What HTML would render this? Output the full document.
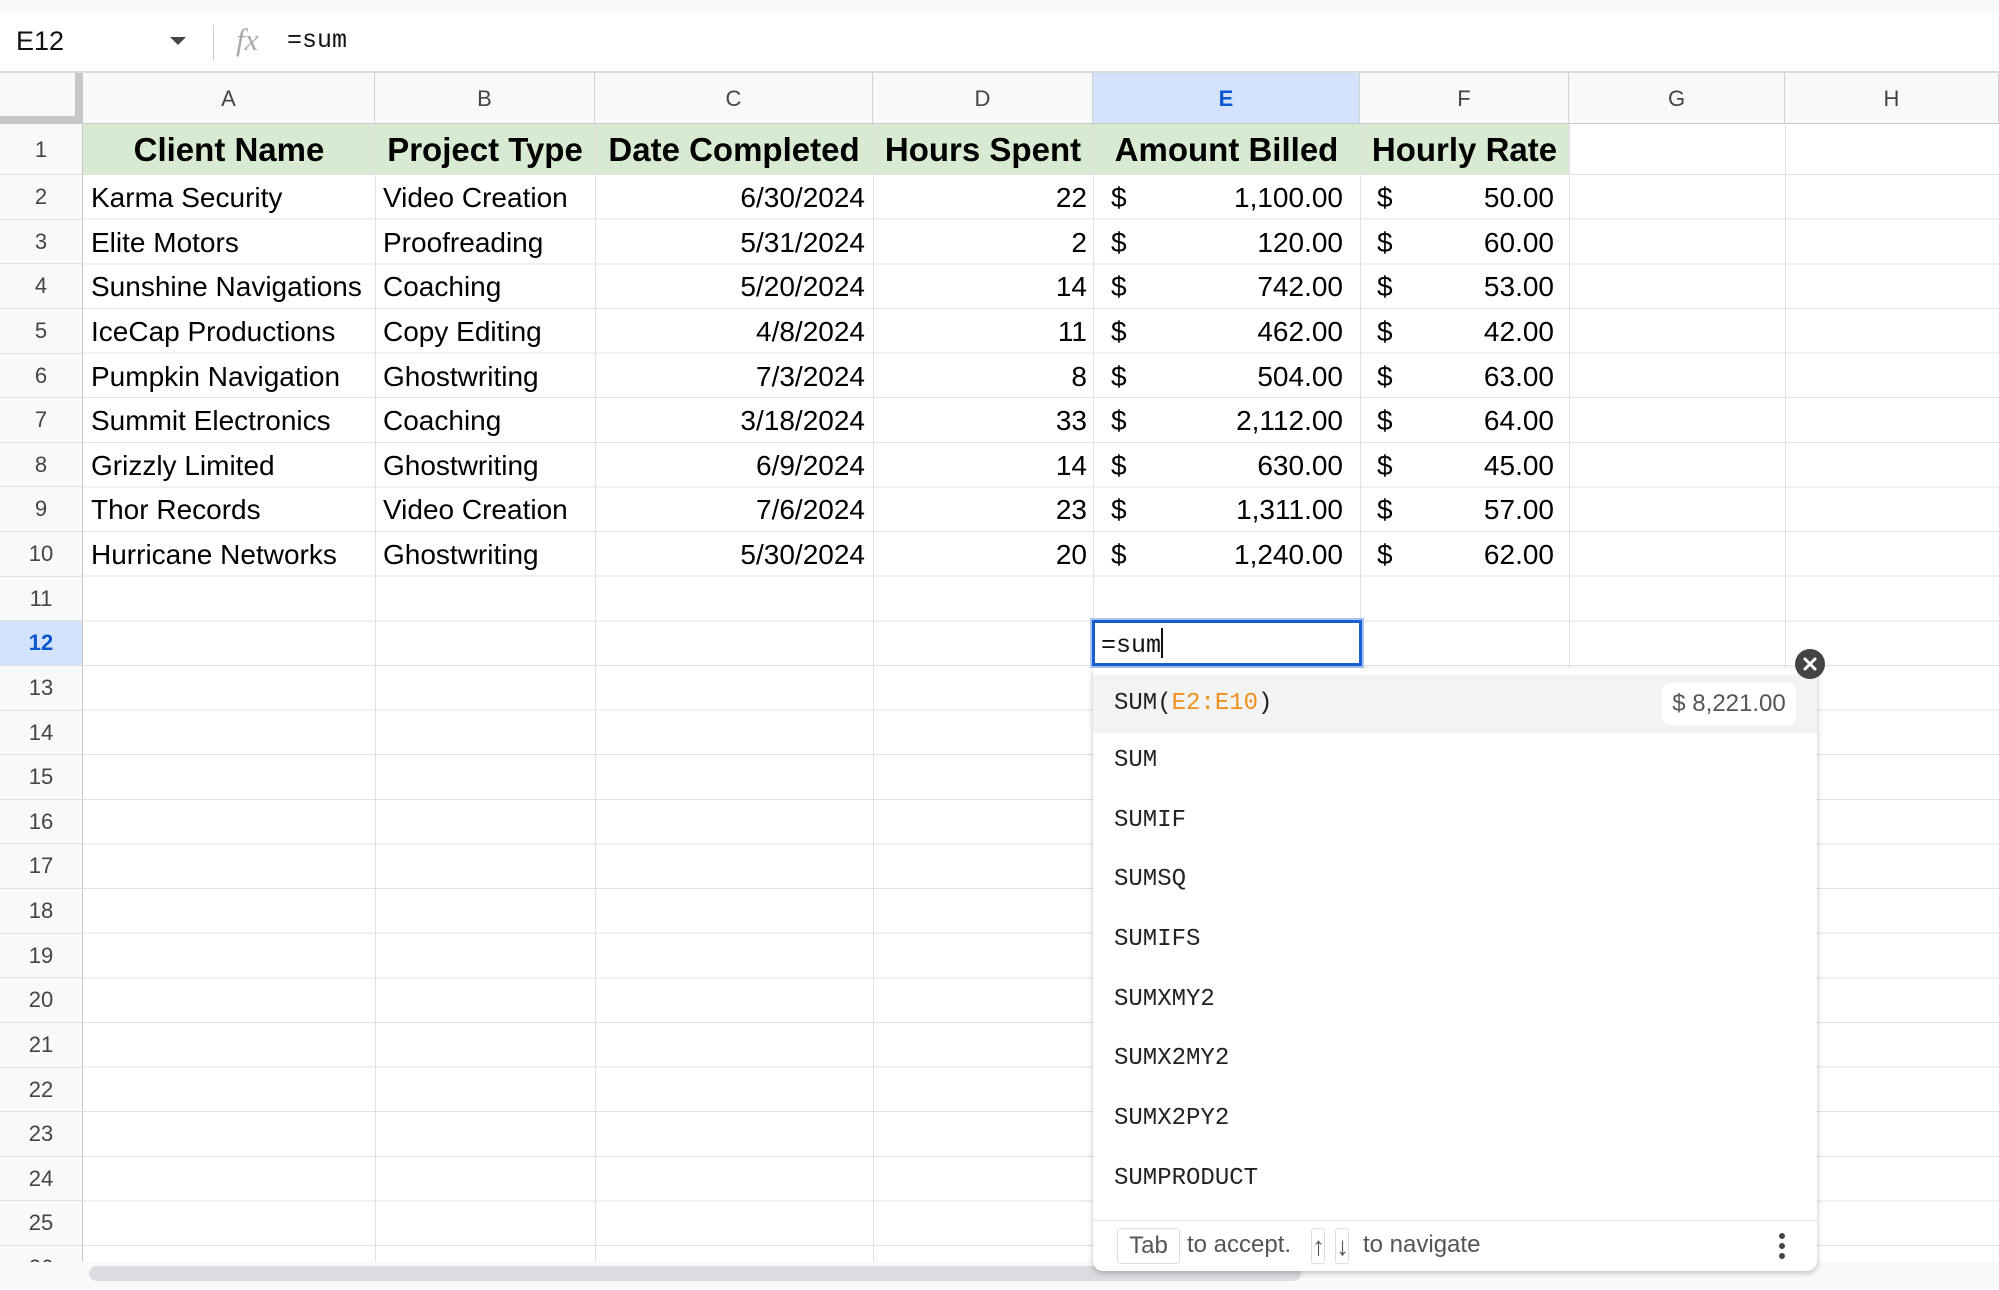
<!DOCTYPE html>
<html><head><meta charset="utf-8"><style>
*{margin:0;padding:0;box-sizing:border-box}
body{width:1999px;height:1289px;overflow:hidden;background:#fff;font-family:"Liberation Sans",Arial,sans-serif;position:relative;color:#000}
.a{position:absolute;white-space:nowrap}
.grid{position:absolute;left:83px;top:175px;width:1916px;height:1090px;
background-image:repeating-linear-gradient(to bottom,transparent 0,transparent 43.63px,#e1e1e1 43.63px,#e1e1e1 44.63px);}
.vl{position:absolute;width:1px;background:#e1e1e1;top:73px;height:1192px}
.rh{position:absolute;left:0;width:83px;text-align:center;font-size:22px;color:#444;background:#f8f9fa;border-right:1px solid #c7c7c7}
.ch{position:absolute;top:73px;height:51px;line-height:51px;text-align:center;font-size:22px;color:#444;background:#f8f9fa;border-bottom:1px solid #c7c7c7;border-right:1px solid #d0d0d0}
.c{position:absolute;font-size:28px;height:44px;line-height:46px;white-space:nowrap}
.r{text-align:right}
.m{font-family:"Liberation Mono",monospace;font-size:24px;color:#222;position:absolute;left:1114px;white-space:nowrap}
</style></head><body>
<div class="a" style="left:0;top:0;width:1999px;height:13px;background:#f8f9fa"></div>
<div class="a" style="left:0;top:13px;width:1999px;height:60px;border-bottom:2px solid #dadada"></div>
<div class="a" style="left:16px;top:26px;font-size:27px;color:#111">E12</div>
<div class="a" style="left:170px;top:37px;width:0;height:0;border-left:8px solid transparent;border-right:8px solid transparent;border-top:8px solid #444"></div>
<div class="a" style="left:213px;top:25px;width:1px;height:36px;background:#ccc"></div>
<div class="a" style="left:236px;top:22px;font-family:'Liberation Serif',serif;font-style:italic;font-size:31px;color:#aaa">fx</div>
<div class="a" style="left:287px;top:26px;font-family:'Liberation Mono',monospace;font-size:25px;color:#111">=sum</div>

<div class="grid"></div>
<div class="a" style="left:83px;top:124px;width:1486px;height:51px;background:#d9ead3"></div>
<div class="vl" style="left:375px"></div><div class="vl" style="left:595px"></div><div class="vl" style="left:873px"></div><div class="vl" style="left:1093px"></div><div class="vl" style="left:1360px"></div><div class="vl" style="left:1569px"></div><div class="vl" style="left:1785px"></div>
<div class="a" style="left:83px;top:174px;width:1916px;height:1px;background:#e1e1e1"></div>
<div class="ch" style="left:0;width:83px;border-right:8px solid #c7c7c7;border-bottom:8px solid #c7c7c7;height:51px"></div>
<div class="ch" style="left:83px;width:292px">A</div>
<div class="ch" style="left:375px;width:220px">B</div>
<div class="ch" style="left:595px;width:278px">C</div>
<div class="ch" style="left:873px;width:220px">D</div>
<div class="ch" style="left:1093px;width:267px;background:#d3e3fd;color:#0b57d0;font-weight:bold">E</div>
<div class="ch" style="left:1360px;width:209px">F</div>
<div class="ch" style="left:1569px;width:216px">G</div>
<div class="ch" style="left:1785px;width:214px">H</div>
<div class="rh" style="top:124px;height:51px;line-height:51px;border-bottom:1px solid #e1e1e1">1</div>
<div style="position:absolute;left:0;top:175px;width:83px">
<div class="rh" style="position:relative;height:44.63px;line-height:44px;border-bottom:1px solid #e1e1e1">2</div>
<div class="rh" style="position:relative;height:44.63px;line-height:44px;border-bottom:1px solid #e1e1e1">3</div>
<div class="rh" style="position:relative;height:44.63px;line-height:44px;border-bottom:1px solid #e1e1e1">4</div>
<div class="rh" style="position:relative;height:44.63px;line-height:44px;border-bottom:1px solid #e1e1e1">5</div>
<div class="rh" style="position:relative;height:44.63px;line-height:44px;border-bottom:1px solid #e1e1e1">6</div>
<div class="rh" style="position:relative;height:44.63px;line-height:44px;border-bottom:1px solid #e1e1e1">7</div>
<div class="rh" style="position:relative;height:44.63px;line-height:44px;border-bottom:1px solid #e1e1e1">8</div>
<div class="rh" style="position:relative;height:44.63px;line-height:44px;border-bottom:1px solid #e1e1e1">9</div>
<div class="rh" style="position:relative;height:44.63px;line-height:44px;border-bottom:1px solid #e1e1e1">10</div>
<div class="rh" style="position:relative;height:44.63px;line-height:44px;border-bottom:1px solid #e1e1e1">11</div>
<div class="rh" style="position:relative;height:44.63px;line-height:44px;border-bottom:1px solid #e1e1e1;background:#d3e3fd;color:#0b57d0;font-weight:bold">12</div>
<div class="rh" style="position:relative;height:44.63px;line-height:44px;border-bottom:1px solid #e1e1e1">13</div>
<div class="rh" style="position:relative;height:44.63px;line-height:44px;border-bottom:1px solid #e1e1e1">14</div>
<div class="rh" style="position:relative;height:44.63px;line-height:44px;border-bottom:1px solid #e1e1e1">15</div>
<div class="rh" style="position:relative;height:44.63px;line-height:44px;border-bottom:1px solid #e1e1e1">16</div>
<div class="rh" style="position:relative;height:44.63px;line-height:44px;border-bottom:1px solid #e1e1e1">17</div>
<div class="rh" style="position:relative;height:44.63px;line-height:44px;border-bottom:1px solid #e1e1e1">18</div>
<div class="rh" style="position:relative;height:44.63px;line-height:44px;border-bottom:1px solid #e1e1e1">19</div>
<div class="rh" style="position:relative;height:44.63px;line-height:44px;border-bottom:1px solid #e1e1e1">20</div>
<div class="rh" style="position:relative;height:44.63px;line-height:44px;border-bottom:1px solid #e1e1e1">21</div>
<div class="rh" style="position:relative;height:44.63px;line-height:44px;border-bottom:1px solid #e1e1e1">22</div>
<div class="rh" style="position:relative;height:44.63px;line-height:44px;border-bottom:1px solid #e1e1e1">23</div>
<div class="rh" style="position:relative;height:44.63px;line-height:44px;border-bottom:1px solid #e1e1e1">24</div>
<div class="rh" style="position:relative;height:44.63px;line-height:44px;border-bottom:1px solid #e1e1e1">25</div>
<div class="rh" style="position:relative;height:30px;line-height:44px">26</div>
</div>
<div style="position:absolute;top:124px;left:0;height:51px;font-weight:bold;font-size:33px;line-height:51px">
<div class="a" style="left:83px;width:292px;text-align:center">Client Name</div>
<div class="a" style="left:375px;width:220px;text-align:center">Project Type</div>
<div class="a" style="left:595px;width:278px;text-align:center">Date Completed</div>
<div class="a" style="left:873px;width:220px;text-align:center">Hours Spent</div>
<div class="a" style="left:1093px;width:267px;text-align:center">Amount Billed</div>
<div class="a" style="left:1360px;width:209px;text-align:center">Hourly Rate</div>
</div>
<div style="position:absolute;left:0;top:175px;width:1999px">
<div style="position:relative;height:44.63px"><span class="c" style="left:91px">Karma Security</span><span class="c" style="left:383px">Video Creation</span><span class="c r" style="right:1134px">6/30/2024</span><span class="c r" style="right:912px">22</span><span class="c" style="left:1111px">$</span><span class="c r" style="right:656px">1,100.00</span><span class="c" style="left:1377px">$</span><span class="c r" style="right:445px">50.00</span></div>
<div style="position:relative;height:44.63px"><span class="c" style="left:91px">Elite Motors</span><span class="c" style="left:383px">Proofreading</span><span class="c r" style="right:1134px">5/31/2024</span><span class="c r" style="right:912px">2</span><span class="c" style="left:1111px">$</span><span class="c r" style="right:656px">120.00</span><span class="c" style="left:1377px">$</span><span class="c r" style="right:445px">60.00</span></div>
<div style="position:relative;height:44.63px"><span class="c" style="left:91px">Sunshine Navigations</span><span class="c" style="left:383px">Coaching</span><span class="c r" style="right:1134px">5/20/2024</span><span class="c r" style="right:912px">14</span><span class="c" style="left:1111px">$</span><span class="c r" style="right:656px">742.00</span><span class="c" style="left:1377px">$</span><span class="c r" style="right:445px">53.00</span></div>
<div style="position:relative;height:44.63px"><span class="c" style="left:91px">IceCap Productions</span><span class="c" style="left:383px">Copy Editing</span><span class="c r" style="right:1134px">4/8/2024</span><span class="c r" style="right:912px">11</span><span class="c" style="left:1111px">$</span><span class="c r" style="right:656px">462.00</span><span class="c" style="left:1377px">$</span><span class="c r" style="right:445px">42.00</span></div>
<div style="position:relative;height:44.63px"><span class="c" style="left:91px">Pumpkin Navigation</span><span class="c" style="left:383px">Ghostwriting</span><span class="c r" style="right:1134px">7/3/2024</span><span class="c r" style="right:912px">8</span><span class="c" style="left:1111px">$</span><span class="c r" style="right:656px">504.00</span><span class="c" style="left:1377px">$</span><span class="c r" style="right:445px">63.00</span></div>
<div style="position:relative;height:44.63px"><span class="c" style="left:91px">Summit Electronics</span><span class="c" style="left:383px">Coaching</span><span class="c r" style="right:1134px">3/18/2024</span><span class="c r" style="right:912px">33</span><span class="c" style="left:1111px">$</span><span class="c r" style="right:656px">2,112.00</span><span class="c" style="left:1377px">$</span><span class="c r" style="right:445px">64.00</span></div>
<div style="position:relative;height:44.63px"><span class="c" style="left:91px">Grizzly Limited</span><span class="c" style="left:383px">Ghostwriting</span><span class="c r" style="right:1134px">6/9/2024</span><span class="c r" style="right:912px">14</span><span class="c" style="left:1111px">$</span><span class="c r" style="right:656px">630.00</span><span class="c" style="left:1377px">$</span><span class="c r" style="right:445px">45.00</span></div>
<div style="position:relative;height:44.63px"><span class="c" style="left:91px">Thor Records</span><span class="c" style="left:383px">Video Creation</span><span class="c r" style="right:1134px">7/6/2024</span><span class="c r" style="right:912px">23</span><span class="c" style="left:1111px">$</span><span class="c r" style="right:656px">1,311.00</span><span class="c" style="left:1377px">$</span><span class="c r" style="right:445px">57.00</span></div>
<div style="position:relative;height:44.63px"><span class="c" style="left:91px">Hurricane Networks</span><span class="c" style="left:383px">Ghostwriting</span><span class="c r" style="right:1134px">5/30/2024</span><span class="c r" style="right:912px">20</span><span class="c" style="left:1111px">$</span><span class="c r" style="right:656px">1,240.00</span><span class="c" style="left:1377px">$</span><span class="c r" style="right:445px">62.00</span></div>
</div>
<!-- scrollbar -->
<div class="a" style="left:0;top:1262px;width:1999px;height:27px;background:#f8f9fa"></div>
<div class="a" style="left:89px;top:1266px;width:1212px;height:15px;border-radius:8px;background:#dadce0"></div>
<!-- selected cell -->
<div class="a" style="left:1092px;top:620px;width:270px;height:46px;border:3px solid #1a5fd0;background:#fff;box-shadow:0 0 0 2px #a8c4f5"></div>
<div class="a" style="left:1101px;top:628px;font-family:'Liberation Mono',monospace;font-size:25px;color:#111">=sum<span style="display:inline-block;width:2px;height:30px;background:#111;vertical-align:-6px"></span></div>
<!-- dropdown -->
<div class="a" style="left:1093px;top:668px;width:724px;height:603px;background:#fff;border-radius:0 0 10px 10px;box-shadow:0 2px 6px rgba(0,0,0,.25)"></div>
<div class="a" style="left:1093px;top:675px;width:724px;height:58px;background:#f3f3f3"></div>
<div class="a" style="left:1662px;top:683px;width:134px;height:42px;background:#fff;border-radius:8px;font-size:24px;color:#555;line-height:42px;text-align:center">$ 8,221.00</div>
<div class="m" style="top:690px">SUM(<span style="color:#f0901c">E2:E10</span>)</div>
<div class="m" style="top:747px">SUM</div>
<div class="m" style="top:807px">SUMIF</div>
<div class="m" style="top:866px">SUMSQ</div>
<div class="m" style="top:926px">SUMIFS</div>
<div class="m" style="top:986px">SUMXMY2</div>
<div class="m" style="top:1045px">SUMX2MY2</div>
<div class="m" style="top:1105px">SUMX2PY2</div>
<div class="m" style="top:1165px">SUMPRODUCT</div>
<div class="a" style="left:1093px;top:1220px;width:724px;height:1px;background:#e0e0e0"></div>
<div class="a" style="left:1117px;top:1228px;width:63px;height:36px;border:1px solid #ddd;border-radius:3px;font-size:24px;color:#555;text-align:center;line-height:34px">Tab</div>
<div class="a" style="left:1187px;top:1231px;font-size:24px;color:#555">to accept.</div>
<div class="a" style="left:1311px;top:1228px;width:14px;height:36px;border:1px solid #ddd;border-radius:3px;font-size:26px;color:#555;text-align:center;line-height:34px">↑</div>
<div class="a" style="left:1335px;top:1228px;width:14px;height:36px;border:1px solid #ddd;border-radius:3px;font-size:26px;color:#555;text-align:center;line-height:34px">↓</div>
<div class="a" style="left:1363px;top:1231px;font-size:24px;color:#555">to navigate</div>
<div class="a" style="left:1779px;top:1233px;width:6px;height:6px;border-radius:50%;background:#444"></div>
<div class="a" style="left:1779px;top:1243px;width:6px;height:6px;border-radius:50%;background:#444"></div>
<div class="a" style="left:1779px;top:1253px;width:6px;height:6px;border-radius:50%;background:#444"></div>
<svg class="a" style="left:1795px;top:649px" width="30" height="30" viewBox="0 0 30 30"><circle cx="15" cy="15" r="15" fill="#444"/><path d="M10 10L20 20M20 10L10 20" stroke="#fff" stroke-width="3" stroke-linecap="round"/></svg>
</body></html>
